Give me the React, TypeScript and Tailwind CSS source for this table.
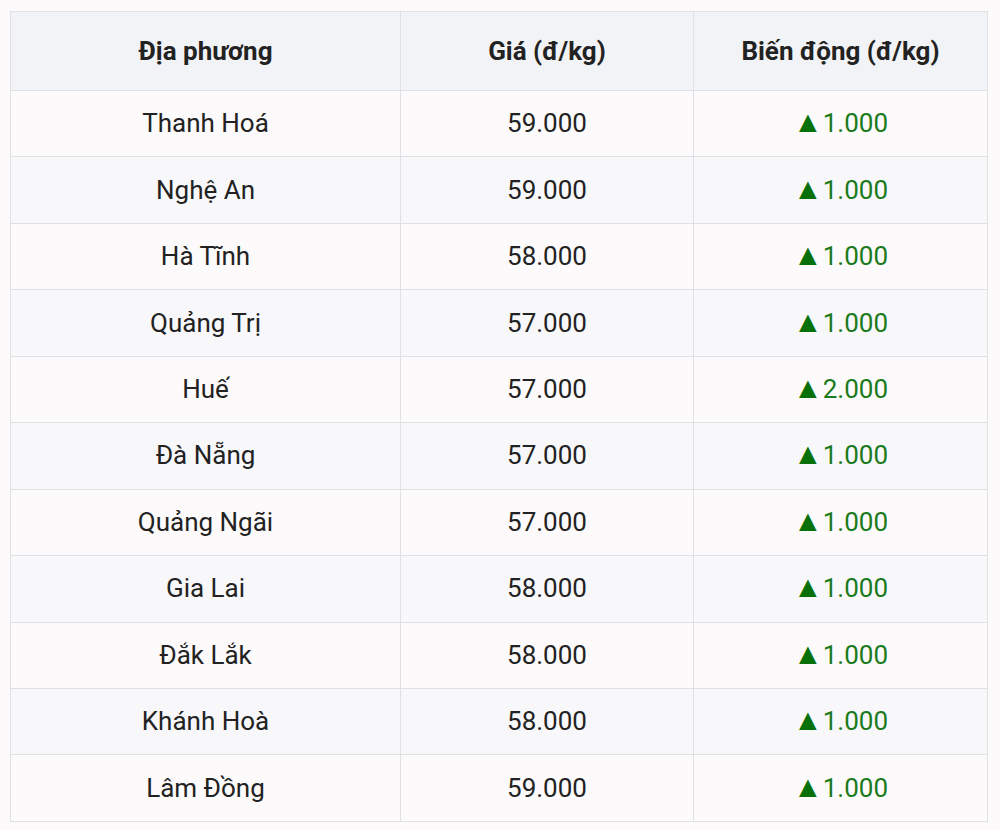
const rows = [
  { place: "Thanh Hoá", price: "59.000", change: "1.000" },
  { place: "Nghệ An", price: "59.000", change: "1.000" },
  { place: "Hà Tĩnh", price: "58.000", change: "1.000" },
  { place: "Quảng Trị", price: "57.000", change: "1.000" },
  { place: "Huế", price: "57.000", change: "2.000" },
  { place: "Đà Nẵng", price: "57.000", change: "1.000" },
  { place: "Quảng Ngãi", price: "57.000", change: "1.000" },
  { place: "Gia Lai", price: "58.000", change: "1.000" },
  { place: "Đắk Lắk", price: "58.000", change: "1.000" },
  { place: "Khánh Hoà", price: "58.000", change: "1.000" },
  { place: "Lâm Đồng", price: "59.000", change: "1.000" },
]

export default function App() {
  return (
    <div className="min-h-screen bg-[#fcfafa] pt-[11px] pl-[10px] font-['Roboto',sans-serif] text-[#222222]">
      <table className="w-[977px] table-fixed border-collapse text-[26px]">
        <colgroup>
          <col className="w-[390px]" />
          <col className="w-[293px]" />
          <col className="w-[294px]" />
        </colgroup>
        <thead>
          <tr className="bg-[#f2f3f6]">
            <th className="h-[79px] border border-[#e0e1e5] font-bold">Địa phương</th>
            <th className="h-[79px] border border-[#e0e1e5] font-bold">Giá (đ/kg)</th>
            <th className="h-[79px] border border-[#e0e1e5] font-bold">Biến động (đ/kg)</th>
          </tr>
        </thead>
        <tbody>
          {rows.map((r, i) => (
            <tr key={r.place} className={i % 2 === 0 ? "bg-[#fcfafa]" : "bg-[#f8f8fb]"}>
              <td className="h-[66.45px] border border-[#e0e1e5] text-center">{r.place}</td>
              <td className="h-[66.45px] border border-[#e0e1e5] text-center">{r.price}</td>
              <td className="h-[66.45px] border border-[#e0e1e5] text-center text-[#1b7a1b]">
                <span className="text-[30px] leading-none text-[#087008]">▲</span>
                {r.change}
              </td>
            </tr>
          ))}
        </tbody>
      </table>
    </div>
  )
}
